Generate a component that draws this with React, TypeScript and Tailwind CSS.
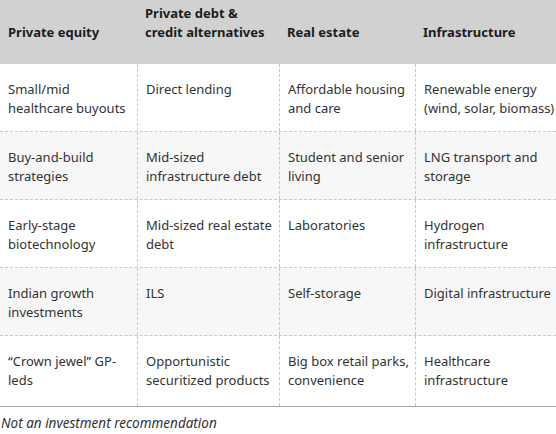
const headers = ["Private equity", "Private debt &\ncredit alternatives", "Real estate", "Infrastructure"];

const rows: string[][] = [
  ["Small/mid\nhealthcare buyouts", "Direct lending", "Affordable housing\nand care", "Renewable energy\n(wind, solar, biomass)"],
  ["Buy-and-build\nstrategies", "Mid-sized\ninfrastructure debt", "Student and senior\nliving", "LNG transport and\nstorage"],
  ["Early-stage\nbiotechnology", "Mid-sized real estate\ndebt", "Laboratories", "Hydrogen\ninfrastructure"],
  ["Indian growth\ninvestments", "ILS", "Self-storage", "Digital infrastructure"],
  ["\u201cCrown jewel\u201d GP-\nleds", "Opportunistic\nsecuritized products", "Big box retail parks,\nconvenience", "Healthcare\ninfrastructure"],
];

const cols = "grid grid-cols-[137px_142px_136px_141px]";

export default function App() {
  return (
    <div className="w-[556px] h-[434px] bg-white font-['Noto_Sans',sans-serif] text-[13px] leading-[19px]">
      <div className={`${cols} h-[64px] bg-[#d1d1d1] text-[#1c1c1c] font-bold`}>
        {headers.map((h, i) => (
          <div key={i} className="flex items-end pl-2 pb-[22px] pt-1 whitespace-pre">
            <span>{h}</span>
          </div>
        ))}
      </div>
      {rows.map((r, ri) => (
        <div
          key={ri}
          className={`${cols} ${ri % 2 === 1 ? "bg-[#f7f7f7]" : "bg-white"} ${
            ri === rows.length - 1 ? "border-b border-solid border-[#a8a8a8] h-[71px]" : "border-b border-dashed border-[#c8c8c8] h-[68px]"
          } text-[#333]`}
        >
          {r.map((c, ci) => (
            <div
              key={ci}
              className={`pl-2 pt-[16px] whitespace-pre ${ci > 0 ? "border-l border-dashed border-[#c8c8c8]" : ""}`}
            >
              {c}
            </div>
          ))}
        </div>
      ))}
      <p className="italic text-[#333] text-[13.5px] pt-[7px] pl-[1px]">Not an investment recommendation</p>
    </div>
  );
}
